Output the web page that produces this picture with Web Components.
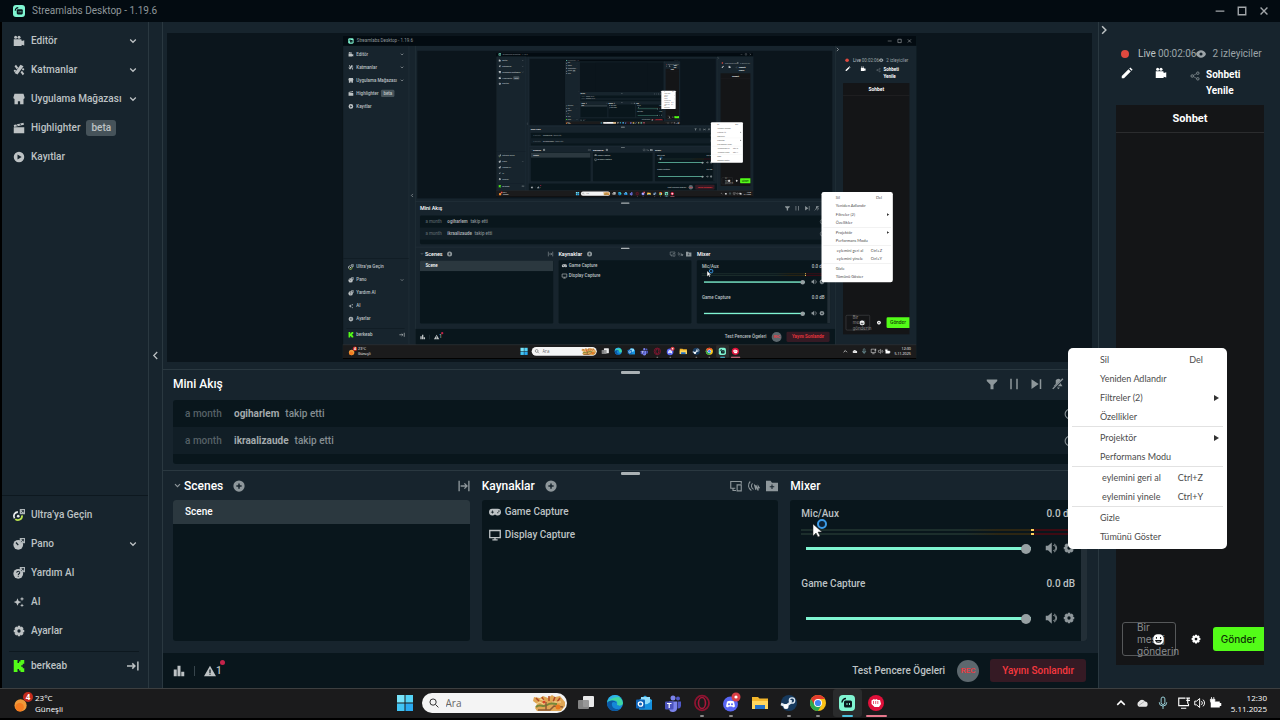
<!DOCTYPE html>
<html lang="tr">
<head>
<meta charset="utf-8">
<title>Streamlabs Desktop</title>
<style>
  :root {
    --bg: #17242d;
    --section: #09161c;
    --bar: #030b11;
    --line: #2a3840;
    --text: #bdc2c4;
    --muted: #8e979b;
    --title: #ffffff;
    --teal: #80f5d2;
    --red: #f5383f;
    --chat: #141517;
    --kick: #53fc18;
  }
  body {
    margin: 0;
    background: #000;
  }
  stream-desktop {
    height: 100vh;
  }
</style>
</head>
<body>
<stream-desktop level="0"></stream-desktop>

<script>
const EXT = '<path d="M9 0h7v7H9z" fill="#aeb5b8"/><path d="M11 5l3-3M11.500 2H14v2.500" stroke="#17242d" fill="none"/>';

const ICONS = {
  logo: '<rect width="16" height="16" rx="4" fill="#80f5d2"/><path d="M3 7.500a4 4 0 0 1 4-4" stroke="#09161c" stroke-width="1.500" fill="none"/><rect x="5" y="5.500" width="8" height="7" rx="1.500" fill="#09161c"/><path d="M8 8v2M10.500 8v2" stroke="#80f5d2"/>',
  camera: '<circle cx="3.500" cy="3" r="2"/><circle cx="8" cy="3" r="2"/><path d="M1 5.500h9.500a1 1 0 0 1 1 1V8L15 7v7l-3.500-1v1.500H1z"/>',
  layers: '<path d="M10 1l4 2-8 11-4-2z"/><path d="M2 3l2-2 3 4-2 2zM10 11l2-2 3 4-2 2z"/><circle cx="13.500" cy="7" r="1.500"/><circle cx="2.500" cy="9" r="1.500"/>',
  store: '<path d="M2 1h12l1.500 5a2 2 0 0 1-1.500 2v7H9.500v-4h-3v4H2V8A2 2 0 0 1 .5 6z"/>',
  clapper: '<path d="M1 4l13-3 .6 2.500-13 3zM1 7h14v8H1z"/><path d="M4.500 3l1.500 2.500M9 2l1.500 2.500" stroke="#17242d"/>',
  play: '<path fill-rule="evenodd" d="M8 1a7 7 0 1 0 0 14A7 7 0 0 0 8 1zM6 4.800L11.500 8 6 11.200z"/>',
  chevron: '<path d="M3.500 5.500L8 10l4.500-4.500" fill="none" stroke="currentColor" stroke-width="2"/>',
  left: '<path d="M10.500 3L5.500 8l5 5" fill="none" stroke="currentColor" stroke-width="1.800"/>',
  right: '<path d="M5.500 3l5 5-5 5" fill="none" stroke="currentColor" stroke-width="2"/>',
  ultra: '<path d="M2 12.500A5.500 5.500 0 0 1 6.500 4" stroke="#e8ecee" stroke-width="2.400" fill="none"/><path d="M3 13.500a5.500 5.500 0 0 0 9-5" stroke="#b9e04f" stroke-width="2.400" fill="none"/><circle cx="7" cy="9.500" r="1.800" fill="#e8ecee"/>' + EXT,
  pano: '<circle cx="7" cy="9" r="6.500"/><path d="M7 9.500L4 6" stroke="#17242d" stroke-width="1.800"/>' + EXT,
  help: '<circle cx="7" cy="9" r="6.500"/><path d="M5 7.500c0-2.500 4-2.500 4 0C9 9 7 9 7 10.500M7 11.500V13" stroke="#17242d" stroke-width="1.400" fill="none"/>' + EXT,
  sparkle: '<path d="M6 3l1.500 3.500L11 8 7.500 9.500 6 13 4.500 9.500 1 8l3.500-1.500zM12 1l.8 2L15 4l-2.200.8L12 7l-.8-2.200L9 4l2.200-1zM12 10l.7 1.700 1.800.8-1.800.7L12 15l-.7-1.800-1.800-.7 1.800-.8z"/>',
  gear: '<path fill-rule="evenodd" d="M6.500 1h3l.5 2 1.800-1 2.200 2.200-1 1.800 2 .5v3l-2 .5 1 1.800-2.200 2.200-1.800-1-.5 2h-3l-.5-2-1.800 1L2 11.800 3 10l-2-.5v-3L3 6 2 4.200 4.200 2 6 3zM8 5.800a2.200 2.200 0 1 0 0 4.400 2.200 2.200 0 0 0 0-4.400z"/>',
  kick: '<path d="M1 0h5v4h2V2h2V0h5v5h-2v2h-2v2h2v2h2v5h-5v-2H8v-2H6v4H1z" fill="#53fc18"/>',
  dock: '<path d="M0 8h10M7 4.500L10.500 8 7 11.500M14.500 2v12" fill="none" stroke="currentColor" stroke-width="2"/>',
  plus: '<path fill-rule="evenodd" d="M8 .5a7.500 7.500 0 1 0 0 15A7.500 7.500 0 0 0 8 .5zM7 4.500h2V7h2.500v2H9v2.500H7V9H4.500V7H7z"/>',
  transition: '<path d="M1.500 1v14M14.500 1v14M3.500 8h8M8.500 4.500L12 8l-3.500 3.500" fill="none" stroke="currentColor" stroke-width="1.800"/>',
  gamepad: '<path fill-rule="evenodd" d="M4.500 3.500h7a4.500 4.500 0 0 1 0 9c-1.500 0-2-1-3.500-1s-2 1-3.500 1a4.500 4.500 0 0 1 0-9zM4 6v1.500H2.500v1H4V10h1V8.500h1.500v-1H5V6zM11 8.300v1.500h1.500V8.300zM12.500 6v1.500H14V6z"/>',
  monitor: '<path d="M1 2h14v9.500H1zM8 12v2M4.500 14.500h7" fill="none" stroke="currentColor" stroke-width="1.800"/>',
  screens: '<path d="M15 5V2H1v9h6M4 11v3h4M9.500 6.500h5.500v8H9.500z" fill="none" stroke="currentColor" stroke-width="1.500"/>',
  cast: '<path d="M3 2a7.500 7.500 0 0 0 1.500 12M6 4.500a5 5 0 0 0 1.500 8M8.500 6l2 7V7l3 7V8l2 3" fill="none" stroke="currentColor" stroke-width="1.400"/>',
  folder: '<path fill-rule="evenodd" d="M0 1h6l2 2.500h8V15H0zM7.300 6v2.300H5v1.400h2.300V12h1.400V9.700H11V8.300H8.700V6z"/>',
  filter: '<path d="M1 2h14v2l-5 5v6H6V9L1 4z"/>',
  pause: '<path d="M3 1h2v14H3zM11 1h2v14h-2z"/>',
  next: '<path d="M2 1.500L11.500 8 2 14.500zM13 1.500h2v13h-2z"/>',
  mute: '<path d="M5 3a4 4 0 0 1 7 0v5l2 3H2l3-3zM6.500 12.500h4L8.500 15z"/><path d="M15.500 1L1.500 15" stroke="#17242d" stroke-width="3"/><path d="M14.500 1L1 14.500" stroke="currentColor" stroke-width="1.800"/>',
  speaker: '<path d="M1 5h3l5-4.500v15L4 11H1z"/><path d="M11 4.500a3.500 3.500 0 0 1 0 7M12 2.500a6 6 0 0 1 0 11" fill="none" stroke="currentColor" stroke-width="1.200"/>',
  volume: '<path d="M1 5.500h2.500L7.500 2v12l-4-3.500H1zM10 5.500a3.500 3.500 0 0 1 0 5M12 3.500a6 6 0 0 1 0 9" fill="none" stroke="currentColor" stroke-width="1.300"/>',
  stats: '<path d="M1 6h4v9H1zM6 1h4v14H6zM11 9h4v6h-4z"/>',
  warn: '<path fill-rule="evenodd" d="M8 1l8 14H0zM7.200 6v4.500h1.600V6zm0 5.500V13h1.600v-1.500z"/>',
  pencil: '<path d="M1 12L10 3l3 3-9 9H1zM11 2l1.500-1.500L15.500 3.500 14 5z"/>',
  share: '<path d="M3.500 8L12 3.500M3.500 8L12 12.500" stroke="currentColor"/><circle cx="3.500" cy="8" r="2" fill="#17242d" stroke="currentColor" stroke-width="1.300"/><circle cx="12.500" cy="3.500" r="2" fill="#17242d" stroke="currentColor" stroke-width="1.300"/><circle cx="12.500" cy="12.500" r="2" fill="#17242d" stroke="currentColor" stroke-width="1.300"/>',
  eye: '<path fill-rule="evenodd" d="M0 8c3-8 13-8 16 0-3 8-13 8-16 0zm8-2.500a2.500 2.500 0 1 0 0 5 2.500 2.500 0 0 0 0-5z"/>',
  smile: '<rect x=".5" y=".5" width="15" height="15" rx="6" fill="#fff"/><path d="M5 4.500v2.500M11 4.500v2.500M4 9.500h8c-1 3.500-7 3.500-8 0z" stroke="#141517" stroke-width="1.500"/>',
  min: '<path d="M1 7.200h14v2H1z"/>',
  max: '<path d="M2 2h12v12H2z" fill="none" stroke="currentColor" stroke-width="2.200"/>',
  close: '<path d="M2.500 2.500l11 11M13.500 2.500l-11 11" stroke="currentColor" stroke-width="2.200"/>',
  record: '<circle cx="8" cy="8" r="8" fill="#e0493f"/>',
  circle: '<circle cx="8" cy="8" r="6.500" fill="none" stroke="currentColor" stroke-width="1.500"/>',

  weather: '<circle cx="7" cy="10" r="6.500" fill="#f09a3a"/><circle cx="6" cy="12" r="4.500" fill="#f47c20"/>',
  windows: '<path d="M0 0h7.500v7.500H0z" fill="#79e4f9"/><path d="M8.500 0H16v7.500H8.500z" fill="#55d4f7"/><path d="M0 8.500h7.500V16H0z" fill="#42c5f4"/><path d="M8.500 8.500H16V16H8.500z" fill="#2aaaf0"/>',
  search: '<circle cx="6.500" cy="6.500" r="5" fill="none" stroke="#333" stroke-width="1.600"/><path d="M10.500 10.500L15 15" stroke="#333" stroke-width="1.600"/>',
  tasks: '<rect x="5" y="1" width="11" height="11" rx="1" fill="#e9e9e9"/><rect x="0" y="5" width="11" height="9" rx="1" fill="#8f8f8f" opacity=".9"/>',
  edge: '<circle cx="8" cy="8" r="8" fill="#1588d8"/><path d="M.2 7A8 8 0 0 1 16 8c0 3-5 3.500-6 1.500.5-1 .5-4-3-4S.5 7 .2 7z" fill="#3fd6a4"/><path d="M.2 7A8 8 0 0 1 8 0c3 0 4 1 5 2-5 0-9 1-12.800 5z" fill="#2fb4e6"/><path d="M5 8c-1 4 3 7.500 8 5.500C9 18 .5 16.500 0 8.500 1.500 4.500 8 4.500 9.500 8 7.500 6.500 5.500 6.500 5 8z" fill="#0c59a4"/>',
  outlook: '<path d="M3 5l6-4.500L16 5v9.500H3z" fill="#28a8ea"/><path d="M5 2h9v7H5z" fill="#8fdcfb"/><path d="M3 14.500L16 6v8.500z" fill="#1490df"/><rect y="4.500" width="9" height="9" rx="1" fill="#0f64b8"/><circle cx="4.500" cy="9" r="2.200" fill="none" stroke="#fff" stroke-width="1.300"/>',
  teams: '<circle cx="8" cy="3" r="2.500" fill="#7b83eb"/><circle cx="13" cy="3.500" r="2" fill="#5059c9"/><path d="M4 6.500h8v6a4 4 0 0 1-8 1z" fill="#7b83eb"/><path d="M12.500 6.500H16V11a3 3 0 0 1-3.500 2.500z" fill="#5059c9"/><rect y="6.500" width="8.500" height="8" rx="1" fill="#4b53bc"/><path d="M2 8.500h4.500M4.200 8.500v4.500" stroke="#fff" stroke-width="1.200"/>',
  opera: '<ellipse cx="8" cy="8" rx="7" ry="7.400" fill="none" stroke="#8d1330" stroke-width="1.800"/><ellipse cx="8" cy="8" rx="3.500" ry="5.500" fill="none" stroke="#a8173a" stroke-width="1.600"/>',
  discord: '<circle cx="7.500" cy="9" r="7.500" fill="#5865f2"/><path d="M4 6.500c2-1 5-1 7 0l1 5-2 1-.8-1H5.800l-.8 1-2-1z" fill="#fff"/><circle cx="6" cy="9.300" r="1" fill="#5865f2"/><circle cx="9" cy="9.300" r="1" fill="#5865f2"/><circle cx="13" cy="2" r="4.500" fill="#d93f45"/><circle cx="13" cy="2" r="1.600" fill="#fff"/>',
  files: '<path d="M0 2h6l1.500 1.500H16V14H0z" fill="#f3b62b"/><path d="M0 6h16v8H0z" fill="#ffd75e"/><path d="M3 10h10v4H3z" fill="#2472c8"/>',
  steam: '<circle cx="8" cy="8" r="8" fill="#173a5e"/><path d="M0 9l5 2 4-3 1-3" stroke="#dfe9f2" stroke-width="2.500" fill="none"/><circle cx="11" cy="5.500" r="2.700" fill="none" stroke="#dfe9f2" stroke-width="1.300"/><circle cx="5" cy="11.500" r="2.500" fill="#fff"/>',
  chrome: '<circle cx="8" cy="8" r="8" fill="#fbc116"/><path d="M1.070 4A8 8 0 0 1 14.930 4H8z" fill="#e33b2e"/><path d="M1.070 4A8 8 0 0 0 8 16l3.500-6L8 8z" fill="#2da94f"/><path d="M1.070 4L4.500 10 8 4z" fill="#e33b2e"/><circle cx="8" cy="8" r="4" fill="#fff"/><circle cx="8" cy="8" r="3.100" fill="#4285f4"/>',
  fist: '<circle cx="8" cy="8" r="8" fill="#e0103a"/><path d="M3.500 5.500L6 4l1 .8L8.500 4l1.300.9L12 5l1 4-2 3H6.500L3.500 9z" fill="#fff"/><path d="M5.500 6v3M7.700 6v3M9.800 6v3" stroke="#e0103a" stroke-width=".7"/>',
  up: '<path d="M3 10.500L8 5.500l5 5" fill="none" stroke="#fff" stroke-width="2"/>',
  cloud: '<path d="M4 13a4 4 0 0 1 0-7 4.500 4.500 0 0 1 8 0 3.500 3.500 0 0 1 0 7z" fill="#e6e6e6"/><path d="M4 11l7-5" stroke="#999"/>',
  mic: '<rect x="5.500" y="0" width="5" height="10" rx="2.500" fill="none" stroke="#9bd3dc" stroke-width="1.300"/><path d="M3 7a5 5 0 0 0 10 0M8 12v4" fill="none" stroke="#9bd3dc" stroke-width="1.300"/>',
  net: '<path d="M10 1.500H1v10h13V9M4 15h7M13 1v8M11 1.500h5M11 4.500h5" fill="none" stroke="#fff" stroke-width="1.500"/>',
  battery: '<path d="M1 6h12v2h2v4h-2v2H1z" fill="#fff"/><path d="M2 0v3M5 0v3M.5 3h6v2a3 3 0 0 1-6 0z" fill="#fff" stroke="#fff"/>'
};

class UiIcon extends HTMLElement {
  connectedCallback() {
    if (this.shadowRoot) return;
    this.attachShadow({ mode: 'open' });
    this.shadowRoot.innerHTML = `
      <style>
        :host { display: block; flex: none; width: var(--size, 12px); height: var(--size, 12px); }
        svg { display: block; width: 100%; height: 100%; overflow: visible; }
      </style>
      <svg viewBox="0 0 16 16" fill="currentColor" aria-hidden="true">${ICONS[this.getAttribute('name')]}</svg>`;
  }
}

// Shared base: subclasses return their markup from template()
class BaseElement extends HTMLElement {
  connectedCallback() {
    if (this.shadowRoot) return;
    this.attachShadow({ mode: 'open' });
    this.shadowRoot.innerHTML = `
      <style>
        * { box-sizing: border-box; }
        button { margin: 0; padding: 0; border: 0; background: none; color: inherit; font: inherit; cursor: pointer; }
        a { color: inherit; text-decoration: none; }
        h2, p, ul { margin: 0; padding: 0; font: inherit; list-style: none; }
      </style>
      ${this.template()}`;
  }
}

class TitleBar extends BaseElement {
  template() {
    return `
      <style>
        :host { display: flex; align-items: center; gap: 7px; height: 22px; padding: 0 11px 0 13px;
          background: var(--bar); color: #8f979b; }
        p { flex: 1; }
        .controls { display: flex; gap: 12px; --size: 10px; color: #a3a7aa; }
      </style>
      <ui-icon name="logo"></ui-icon>
      <p>Streamlabs Desktop - 1.19.6</p>
      <div class="controls">
        <button aria-label="Simge durumuna küçült"><ui-icon name="min"></ui-icon></button>
        <button aria-label="Ekranı kapla"><ui-icon name="max"></ui-icon></button>
        <button aria-label="Kapat"><ui-icon name="close"></ui-icon></button>
      </div>`;
  }
}

class NavItem extends BaseElement {
  template() {
    const arrow = this.hasAttribute('expandable')
      ? '<button aria-label="Genişlet"><ui-icon name="chevron"></ui-icon></button>' : '';
    return `
      <style>
        :host { display: flex; align-items: center; height: 29px; padding: 0 10px 0 11px; }
        a { display: flex; align-items: center; gap: 6px; flex: 1; white-space: nowrap; }
        button { --size: 10px; }
      </style>
      <a href="#"><ui-icon name="${this.getAttribute('icon')}"></ui-icon><slot></slot></a>
      ${arrow}`;
  }
}

class NavBadge extends BaseElement {
  template() {
    return `
      <style>
        :host { display: block; padding: 0 5px; border-radius: 3px; background: #46535a; color: var(--text); }
      </style>
      <slot></slot>`;
  }
}

class SideNav extends BaseElement {
  template() {
    return `
      <style>
        :host { display: flex; flex-direction: column; width: 147px; padding-top: 4px;
          border-right: 1px solid var(--line); background: var(--bg); }
        .bottom { margin-top: auto; padding-top: 4px; border-top: 1px solid #0d181f; }
        .user { display: flex; align-items: center; gap: 6px; height: 37px; margin: 6px 9px 0 7px;
          padding: 0 0 8px 4px; border-top: 1px solid #0d181f; }
        .user a { flex: 1; }
      </style>
      <nav>
        <nav-item icon="camera" expandable>Editör</nav-item>
        <nav-item icon="layers" expandable>Katmanlar</nav-item>
        <nav-item icon="store" expandable>Uygulama Mağazası</nav-item>
        <nav-item icon="clapper">Highlighter<nav-badge>beta</nav-badge></nav-item>
        <nav-item icon="play">Kayıtlar</nav-item>
      </nav>
      <div class="bottom">
        <nav-item icon="ultra">Ultra’ya Geçin</nav-item>
        <nav-item icon="pano" expandable>Pano</nav-item>
        <nav-item icon="help">Yardım Al</nav-item>
        <nav-item icon="sparkle">AI</nav-item>
        <nav-item icon="gear">Ayarlar</nav-item>
        <div class="user">
          <ui-icon name="kick"></ui-icon><a href="#">berkeab</a>
          <button aria-label="Çıkış"><ui-icon name="dock"></ui-icon></button>
        </div>
      </div>`;
  }
}

// The captured display shows the whole desktop again, one level deeper
class ScenePreview extends BaseElement {
  template() {
    const level = Number(this.getAttribute('level'));
    const inner = level < 3
      ? `<foreignObject width="1280" height="720"><stream-desktop class="mirror" level="${level + 1}" inert aria-hidden="true"></stream-desktop></foreignObject>`
      : '<rect width="1280" height="720" fill="#0b151c"/>';
    return `
      <style>
        :host { display: flex; flex: 1; box-sizing: border-box; min-height: 0; margin: 11px 6px 0 4px; padding: 3px 0;
          background: #0b151c; }
        svg { display: block; flex: 1; min-width: 0; height: 100%; }
        .mirror { height: 720px; }
      </style>
      <svg viewBox="0 0 1280 720">${inner}</svg>`;
  }
}

class MiniFeed extends BaseElement {
  template() {
    return `
      <style>
        :host { display: block; padding: 0 11px 6px 10px; }
        header { display: flex; align-items: center; height: 20px; margin-bottom: 6px; padding-right: 23px; }
        h2 { flex: 1; color: var(--title); font-size: 12px; font-weight: 500; }
        .tools { display: flex; gap: 10px; color: var(--muted); }
        ul { height: 64px; border-radius: 3px; background: var(--section); overflow: hidden; }
        li { display: flex; align-items: center; height: 27px; padding: 0 11px 0 12px; color: #858e92; }
        li:nth-child(even) { background: #111e26; }
        .when { width: 49px; color: #566167; }
        b { margin-right: 6px; font-weight: 700; color: #a3aaad; }
        .event { flex: 1; }
      </style>
      <header>
        <h2>Mini Akış</h2>
        <div class="tools">
          <button aria-label="Filtre"><ui-icon name="filter"></ui-icon></button>
          <button aria-label="Duraklat"><ui-icon name="pause"></ui-icon></button>
          <button aria-label="Atla"><ui-icon name="next"></ui-icon></button>
          <button aria-label="Sessize al"><ui-icon name="mute"></ui-icon></button>
        </div>
      </header>
      <ul>
        <li><span class="when">a month</span><b>ogiharlem</b><span class="event">takip etti</span><ui-icon name="circle"></ui-icon></li>
        <li><span class="when">a month</span><b>ikraalizaude</b><span class="event">takip etti</span><ui-icon name="circle"></ui-icon></li>
      </ul>`;
  }
}

class DividerHandle extends BaseElement {
  template() {
    return `
      <style>
        :host { display: flex; justify-content: center; box-sizing: border-box; height: 5px; padding-top: 1px; border-top: 1px solid var(--line); }
        span { width: 19px; height: 3px; flex: none; border-radius: 1px; background: #aab1b4; }
      </style>
      <span></span>`;
  }
}

class DockPanel extends BaseElement {
  template() {
    return `
      <style>
        :host { display: flex; flex-direction: column; flex: 1; min-width: 0; }
        header { display: flex; align-items: center; height: 21px; margin-bottom: 4px; color: var(--muted); }
        h2 { color: var(--title); font-size: 12px; font-weight: 500; }
        .body { flex: 1; border-radius: 3px; background: var(--section); overflow: hidden; }
        ::slotted([slot="tools"]) { display: flex; flex: 1; align-items: center; }
      </style>
      <header><slot name="lead"></slot><h2>${this.getAttribute('heading')}</h2><slot name="tools"></slot></header>
      <div class="body"><slot></slot></div>`;
  }
}

class MixerChannel extends BaseElement {
  template() {
    const name = this.getAttribute('name');
    const meter = this.hasAttribute('live') ? 'meter live' : 'meter';
    return `
      <style>
        :host { display: block; box-sizing: border-box; height: 70px; padding: 6px 6px 0 11px; }
        .row { display: flex; justify-content: space-between; height: 16px; align-items: center; }
        .meter { display: flex; flex-direction: column; justify-content: space-between; height: 6px; margin: 7px 0; }
        .live i { display: block; height: 2px; background: linear-gradient(90deg, #1c2e2c 60%, #2c2613 72%, #2c2613 84%, #ffcf5a 84%, #ffcf5a 85%, #3d0b13 85%); }
        .level { display: flex; align-items: center; gap: 6px; height: 12px; padding-left: 5px; color: var(--muted); }
        input { flex: 1; min-width: 0; height: 10px; margin: 0 8px 0 0; appearance: none; background: none; }
        input::-webkit-slider-runnable-track { height: 3px; background: var(--teal); }
        input::-webkit-slider-thumb { appearance: none; width: 10px; height: 10px; margin-top: -3px; border-radius: 50%; background: #97a0a3; }
      </style>
      <div class="row"><label for="volume">${name}</label><span>0.0 dB</span></div>
      <div class="${meter}"><i></i><i></i></div>
      <div class="level">
        <input id="volume" type="range" min="0" max="100" value="100">
        <button aria-label="Sesi kapat"><ui-icon name="speaker"></ui-icon></button>
        <button aria-label="Kanal ayarları"><ui-icon name="gear"></ui-icon></button>
      </div>`;
  }
}

class DockRow extends BaseElement {
  template() {
    return `
      <style>
        :host { display: block; }
        .tools { gap: 6px; padding-left: 10px; }
        .tools .end { margin-left: auto; }
        .lead { width: 11px; --size: 9px; }
        .panels { display: flex; gap: 12px; height: 178px; padding: 0 11px 12px 10px; }
        .scene { display: flex; align-items: center; width: 100%; height: 24px; padding-left: 12px; background: #2b383f; color: #fff; }
        .source { display: flex; align-items: center; gap: 4px; width: 100%; height: 23px; padding-left: 7px; }
        .mixer { height: 100%; border-right: 6px solid #232f37; }
      </style>
      <div class="panels">
        <dock-panel heading="Scenes">
          <button class="lead" slot="lead" aria-label="Sahne koleksiyonu"><ui-icon name="chevron"></ui-icon></button>
          <div slot="tools" class="tools">
            <button aria-label="Sahne ekle"><ui-icon name="plus"></ui-icon></button>
            <button class="end" aria-label="Geçişler"><ui-icon name="transition"></ui-icon></button>
          </div>
          <button class="scene">Scene</button>
        </dock-panel>
        <dock-panel heading="Kaynaklar">
          <div slot="tools" class="tools">
            <button aria-label="Kaynak ekle"><ui-icon name="plus"></ui-icon></button>
            <button class="end" aria-label="Çift çıkış"><ui-icon name="screens"></ui-icon></button>
            <button aria-label="Seçici kayıt"><ui-icon name="cast"></ui-icon></button>
            <button aria-label="Klasör ekle"><ui-icon name="folder"></ui-icon></button>
          </div>
          <button class="source"><ui-icon name="gamepad"></ui-icon>Game Capture</button>
          <button class="source"><ui-icon name="monitor"></ui-icon>Display Capture</button>
        </dock-panel>
        <dock-panel heading="Mixer">
          <div class="mixer">
            <mixer-channel name="Mic/Aux" live></mixer-channel>
            <mixer-channel name="Game Capture"></mixer-channel>
          </div>
        </dock-panel>
      </div>`;
  }
}

class StatusBar extends BaseElement {
  template() {
    return `
      <style>
        :host { display: flex; align-items: center; height: 35px; padding: 0 12px 0 10px; background: var(--section); }
        .left { display: flex; align-items: center; flex: 1; }
        .sep { width: 1px; height: 10px; margin: 0 9px; background: #37454c; }
        .alert { position: relative; display: flex; align-items: center; }
        .alert::after { content: ""; position: absolute; top: -3px; right: -3px; width: 5px; height: 5px; border-radius: 50%; background: #c5234a; }
        .rec { width: 22px; height: 22px; margin: 0 11px 0 12px; border-radius: 50%; background: #5d686e; color: var(--red); font-size: 8px; }
        .end { height: 23px; padding: 0 12px; border-radius: 3px; background: #351a24; color: var(--red); }
      </style>
      <div class="left">
        <button aria-label="İstatistikler"><ui-icon name="stats"></ui-icon></button>
        <span class="sep"></span>
        <button class="alert"><ui-icon name="warn"></ui-icon>1</button>
      </div>
      <button class="test">Test Pencere Ögeleri</button>
      <button class="rec">REC</button>
      <button class="end">Yayını Sonlandır</button>`;
  }
}

class ChatPanel extends BaseElement {
  template() {
    return `
      <style>
        :host { display: flex; flex-direction: column; box-sizing: border-box; width: 182px; padding: 0 16px 23px 17px;
          border-left: 1px solid var(--line); background: var(--bg); }
        .toggle { align-self: flex-start; margin: 2px 0 10px -18px; }
        .live { display: flex; align-items: center; height: 16px; padding-left: 5px; white-space: nowrap; font-weight: 400; --size: 8px; color: #9ca4a8; }
        .live .state { margin: 0 2px 0 9px; color: var(--text); }
        .live .eye { --size: 10px; margin-right: 6px; }
        .actions { display: flex; align-items: flex-start; margin: 5px 0 6px; padding-left: 5px; color: #fff; }
        .actions .clip { margin-left: 22px; }
        .actions .share { margin: 4px 6px 0 23px; --size: 10px; color: var(--muted); }
        .refresh { width: 40px; text-align: left; line-height: 16px; font-weight: 700; }
        .chat { display: flex; flex-direction: column; flex: 1; background: var(--chat); }
        .chat h2 { height: 28px; border-bottom: 1px solid #2b2c2e; color: #fff; text-align: center; line-height: 27px; font-weight: 700; font-size: 11px; }
        form { display: flex; align-items: center; margin-top: auto; padding: 0 0 9px 6px; }
        .field { position: relative; display: flex; align-items: center; width: 54px; height: 34px; padding-left: 14px; border: 1px solid #56585a; border-radius: 3px; }
        textarea { flex: none; width: 47px; height: 36px; padding: 0; border: 0; background: none; color: #fff; resize: none; overflow: hidden; font: 10px/12px Inter, sans-serif; }
        textarea::placeholder { color: #8b8d8f; }
        .emote { position: absolute; right: 11px; --size: 11px; }
        .options { margin-left: 15px; color: #fff; --size: 10px; }
        .send { flex: 1; margin-left: 12px; height: 24px; border-radius: 3px 0 0 3px; background: var(--kick); color: #0d3004; font: 500 10px Inter, sans-serif; }
      </style>
      <button class="toggle" aria-label="Sohbeti gizle"><ui-icon name="right"></ui-icon></button>
      <div class="live">
        <ui-icon name="record"></ui-icon><span class="state">Live</span><span>00:02:06</span>
        <ui-icon class="eye" name="eye"></ui-icon><span>2 izleyiciler</span>
      </div>
      <div class="actions">
        <button aria-label="Düzenle"><ui-icon name="pencil"></ui-icon></button>
        <button class="clip" aria-label="Klip"><ui-icon name="camera"></ui-icon></button>
        <button class="share" aria-label="Paylaş"><ui-icon name="share"></ui-icon></button>
        <button class="refresh">Sohbeti Yenile</button>
      </div>
      <div class="chat">
        <h2>Sohbet</h2>
        <form>
          <div class="field">
            <textarea aria-label="Mesaj" placeholder="Bir&#10;mesaj&#10;gönderin"></textarea>
            <button class="emote" type="button" aria-label="İfade"><ui-icon name="smile"></ui-icon></button>
          </div>
          <button class="options" type="button" aria-label="Ayarlar"><ui-icon name="gear"></ui-icon></button>
          <button class="send" type="button">Gönder</button>
        </form>
      </div>`;
  }
}

class MenuItem extends BaseElement {
  template() {
    const key = this.hasAttribute('key') ? `<kbd>${this.getAttribute('key')}</kbd>` : '';
    const sub = this.hasAttribute('submenu') ? '<i></i>' : '';
    return `
      <style>
        :host { display: block; white-space: nowrap; }
        button { display: flex; align-items: center; width: 100%; height: 19px; padding: 0 8px 0 32px; text-align: left; }
        :host([indent]) button { padding-left: 34px; }
        .label { flex: 1; }
        kbd { margin-right: 16px; font: inherit; }
        i { border: 3px solid transparent; border-left: 5px solid #333; border-right: 0; }
      </style>
      <button role="menuitem"><span class="label"><slot></slot></span>${key}${sub}</button>`;
  }
}

class ContextMenu extends BaseElement {
  template() {
    return `
      <style>
        :host { display: block; padding: 2px 0 3px; border-radius: 5px; background: #fff; color: #4c4c4c;
          font: 9px Lato, "Open Sans", sans-serif; }
        hr { height: 1px; margin: 0 4px 1px; border: 0; background: #e2e2e2; }
      </style>
      <div role="menu">
        <menu-item key="Del">Sil</menu-item>
        <menu-item>Yeniden Adlandır</menu-item>
        <menu-item submenu>Filtreler (2)</menu-item>
        <menu-item>Özellikler</menu-item>
        <hr>
        <menu-item submenu>Projektör</menu-item>
        <menu-item>Performans Modu</menu-item>
        <hr>
        <menu-item indent key="Ctrl+Z">eylemini geri al</menu-item>
        <menu-item indent key="Ctrl+Y">eylemini yinele</menu-item>
        <hr>
        <menu-item>Gizle</menu-item>
        <menu-item>Tümünü Göster</menu-item>
      </div>`;
  }
}

class TaskBar extends BaseElement {
  template() {
    const apps = [
      ['tasks', 'Görev görünümü'], ['edge', 'Edge'], ['outlook', 'Outlook'], ['teams', 'Teams'],
      ['opera', 'Opera GX', 'run'], ['discord', 'Discord', 'run'], ['files', 'Dosya Gezgini'],
      ['steam', 'Steam', 'run'], ['chrome', 'Chrome', 'run'], ['logo', 'Streamlabs', 'active'], ['fist', 'Oyun', 'alert']
    ];
    return `
      <style>
        :host { display: grid; grid-template-columns: 1fr auto 1fr; align-items: center; box-sizing: border-box; height: 32px; padding: 0 13px 2px 14px;
          border-top: 1px solid #3d3f40; border-bottom: 2px solid #000; background: #1b1b1c; color: #fff;
          font: 500 8px/11px "Open Sans", sans-serif; }
        .weather { display: flex; align-items: center; gap: 6px; --size: 15px; }
        .weather span { position: relative; }
        .weather b { position: absolute; top: -4px; right: -4px; width: 10px; height: 10px; border-radius: 50%; background: #c42b1c; font-size: 8px; line-height: 10px; text-align: center; }
        .center { display: flex; align-items: center; --size: 16px; }
        .start, .app { display: flex; align-items: center; justify-content: center; position: relative; width: 29px; height: 28px; }
        .find { display: flex; align-items: center; gap: 7px; width: 145px; height: 20px; margin: 0 5px 0 2px; padding: 0 1px 0 7px; border-radius: 10px; background: #f4f4f4; }
        .find > ui-icon { --size: 10px; }
        .find input { flex: 1; min-width: 0; padding: 0; border: 0; background: none; font: 10px "Open Sans", sans-serif; }
        .find input::placeholder { color: #666; }
        .find svg { width: 34px; height: 18px; flex: none; }
        .app::after { content: ""; position: absolute; bottom: 0; width: 4px; height: 2px; border-radius: 1px; }
        .run::after { background: #8a8a8a; }
        .active { border-radius: 3px; background: #2a2b2c; }
        .active::after { width: 11px; background: #4cc2e0; }
        .alert::after { width: 21px; background: #e8788c; }
        .tray { display: flex; align-items: center; justify-content: flex-end; gap: 9px; --size: 12px; }
        .system { display: flex; gap: 4px; }
        .clock { text-align: right; }
      </style>
      <div class="weather">
        <span><ui-icon name="weather"></ui-icon><b>4</b></span>
        <div>23°C<br>Güneşli</div>
      </div>
      <div class="center">
        <button class="start" aria-label="Başlat"><ui-icon name="windows"></ui-icon></button>
        <div class="find">
          <ui-icon name="search"></ui-icon>
          <input type="search" aria-label="Ara" placeholder="Ara">
          <svg viewBox="0 0 34 18" aria-hidden="true">
            <path d="M2 3l6 1 3-2 5 2 4-3 3 2 5-1 5 6v4l-4 5H5l-2-3 2-4-4-3z" fill="#e0a654"/>
            <path d="M4 4l3 3M10 3l2 4M17 2v5M23 3l-2 5M28 4l-3 4" stroke="#b04a25" stroke-width="1.500"/>
            <path d="M4 10l4-2 3 2 4-1M20 8h9M8 5l5 2" stroke="#f7dc9c" fill="none"/>
            <path d="M4 13c4-4 7 1 11-2s7-1 10-1" stroke="#74873a" stroke-width="2" fill="none"/>
            <path d="M6 16h12l4-4 9 1M14 8v8" stroke="#8a5a34" stroke-width="1.500" fill="none"/>
            <circle cx="26" cy="13" r="2.500" fill="#e8791f"/><circle cx="12" cy="8" r="1.500" fill="#d6452a"/>
          </svg>
        </div>
        ${apps.map(([icon, label, state = '']) => `<button class="app ${state}" aria-label="${label}"><ui-icon name="${icon}"></ui-icon></button>`).join('')}
      </div>
      <div class="tray">
        <ui-icon name="up"></ui-icon>
        <ui-icon name="cloud"></ui-icon>
        <ui-icon name="mic"></ui-icon>
        <div class="system">
          <ui-icon name="net"></ui-icon>
          <ui-icon name="volume"></ui-icon>
          <ui-icon name="battery"></ui-icon>
        </div>
        <div class="clock">12:30<br>5.11.2025</div>
      </div>`;
  }
}

class StreamDesktop extends BaseElement {
  template() {
    return `
      <style>
        :host { display: flex; flex-direction: column; position: relative; overflow: hidden; background: var(--bg);
          color: var(--text); font: 500 10px/16px Roboto, "Liberation Sans", sans-serif; }
        .app { display: flex; flex: 1; min-height: 0; border-left: 2px solid #000; }
        .collapse { display: flex; align-items: center; justify-content: center; width: 14px; border-right: 1px solid var(--line); }
        title-bar { font-weight: 400; }
        main { display: flex; flex-direction: column; flex: 1; min-width: 0; }
        .collapse button { --size: 11px; }
        divider-handle { margin-top: 7px; }
        mini-feed + divider-handle { margin-top: 0; }
        context-menu { position: absolute; left: 1068px; top: 348px; width: 159px; }
        .cursor { position: absolute; left: 812px; top: 518px; width: 16px; height: 20px; }
      </style>
      <title-bar></title-bar>
      <div class="app">
        <side-nav></side-nav>
        <div class="collapse"><button aria-label="Menüyü daralt"><ui-icon name="left"></ui-icon></button></div>
        <main>
          <scene-preview level="${this.getAttribute('level')}"></scene-preview>
          <divider-handle></divider-handle>
          <mini-feed></mini-feed>
          <divider-handle></divider-handle>
          <dock-row></dock-row>
          <status-bar></status-bar>
        </main>
        <chat-panel></chat-panel>
      </div>
      <task-bar></task-bar>
      <context-menu></context-menu>
      <svg class="cursor" viewBox="0 0 16 20" aria-hidden="true">
        <circle cx="10" cy="6" r="4" fill="#0d2236" stroke="#3b9be8" stroke-width="2"/>
        <path d="M1 6v12l3-3 2 4 2-1-2-4h4z" fill="#fff" stroke="#222" stroke-width=".5"/>
      </svg>`;
  }
}

customElements.define('ui-icon', UiIcon);
customElements.define('title-bar', TitleBar);
customElements.define('nav-badge', NavBadge);
customElements.define('nav-item', NavItem);
customElements.define('side-nav', SideNav);
customElements.define('scene-preview', ScenePreview);
customElements.define('mini-feed', MiniFeed);
customElements.define('divider-handle', DividerHandle);
customElements.define('dock-panel', DockPanel);
customElements.define('mixer-channel', MixerChannel);
customElements.define('dock-row', DockRow);
customElements.define('status-bar', StatusBar);
customElements.define('chat-panel', ChatPanel);
customElements.define('menu-item', MenuItem);
customElements.define('context-menu', ContextMenu);
customElements.define('task-bar', TaskBar);
customElements.define('stream-desktop', StreamDesktop);
</script>
</body>
</html>
